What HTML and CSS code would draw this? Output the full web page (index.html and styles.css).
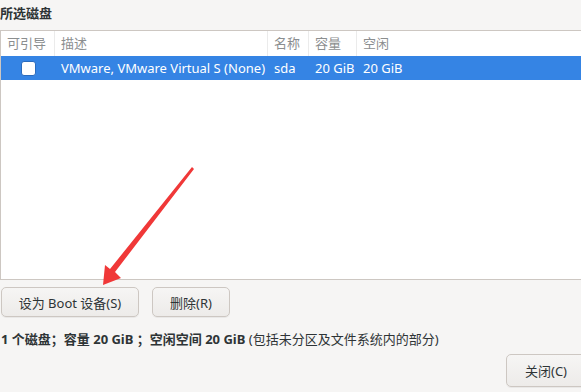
FILE: index.html
```html
<html>

<head>
  <meta charset="utf8">
  <title>所选磁盘</title>
  <link rel="stylesheet" href="styles.css">
</head>

<body>
  <section class="dialog">
    <h1 class="title">所选磁盘</h1>
    <div class="disks">
      <div class="row head">
        <div class="cell">可引导</div>
        <div class="cell">描述</div>
        <div class="cell">名称</div>
        <div class="cell">容量</div>
        <div class="cell">空闲</div>
      </div>
      <div class="row selected">
        <div class="cell check"><span class="box"></span></div>
        <div class="cell">VMware, VMware Virtual S (None)</div>
        <div class="cell">sda</div>
        <div class="cell">20 GiB</div>
        <div class="cell">20 GiB</div>
      </div>
    </div>
    <div class="actions">
      <button class="btn boot">设为 Boot 设备(S)</button>
      <button class="btn remove">删除(R)</button>
    </div>
    <p class="summary"><b>1 个磁盘；容量 20 GiB ；空闲空间 20 GiB</b> (包括未分区及文件系统内的部分)</p>
    <div class="footer">
      <button class="btn close">关闭(C)</button>
    </div>
  </section>
  <!-- red pointer drawn over the screenshot -->
  <svg class="arrow" width="581" height="392" viewBox="0 0 581 392">
    <polygon fill="#f03838" points="192,167 194,169 115,272 121,278 103,285 105,265 110,269"/>
  </svg>
</body>

</html>
```

FILE: styles.css
```css
* {
  margin: 0;
  padding: 0;
  box-sizing: border-box;
}

body {
  width: 581px;
  height: 392px;
  overflow: hidden;
  background: #f6f5f4;
  color: #2e3436;
  font-family: "Noto Sans", "Noto Sans CJK SC", sans-serif;
  font-size: 13px;
  position: relative;
}

.dialog {
  display: flex;
  flex-direction: column;
  width: 600px;
}

.title {
  font-size: 13px;
  font-weight: bold;
  height: 30px;
  line-height: 26px;
}

.disks {
  width: 600px;
  height: 250px;
  background: #fff;
  border: 1px solid #cdc7c2;
}

.row {
  display: grid;
  grid-template-columns: 54px 213px 41px 48px 1fr;
  height: 24px;
  line-height: 24px;
  white-space: nowrap;
}

.row.head {
  height: 25px;
  line-height: 25px;
  color: #8b8e8f;
}

.row.head .cell {
  border-right: 1px solid #ebebeb;
}

.row.head .cell:last-child {
  border-right: none;
}

.cell {
  padding-left: 6px;
  overflow: hidden;
}

.row.selected {
  background: #3584e4;
  color: #fff;
}

.check {
  display: flex;
  align-items: center;
  padding-left: 20px;
}

.box {
  width: 15px;
  height: 15px;
  background: #fff;
  border: 1px solid #2a6bbd;
  border-radius: 3px;
}

.actions {
  display: flex;
  gap: 13px;
  padding: 7px 0 0 1px;
}

.btn {
  height: 30px;
  font-family: inherit;
  font-size: 13px;
  color: #2e3436;
  background: linear-gradient(#f6f5f4, #edebe9);
  border: 1px solid #cdc7c2;
  border-radius: 5px;
  box-shadow: 0 1px 0 rgba(0, 0, 0, 0.05);
}

.boot {
  width: 138px;
}

.remove {
  width: 78px;
}

.summary {
  height: 37px;
  line-height: 30px;
  padding: 7px 0 0 1px;
  white-space: nowrap;
}

.footer {
  display: flex;
  padding-left: 506px;
}

.close {
  width: 80px;
  height: 33px;
}

.arrow {
  position: absolute;
  left: 0;
  top: 0;
}
```
